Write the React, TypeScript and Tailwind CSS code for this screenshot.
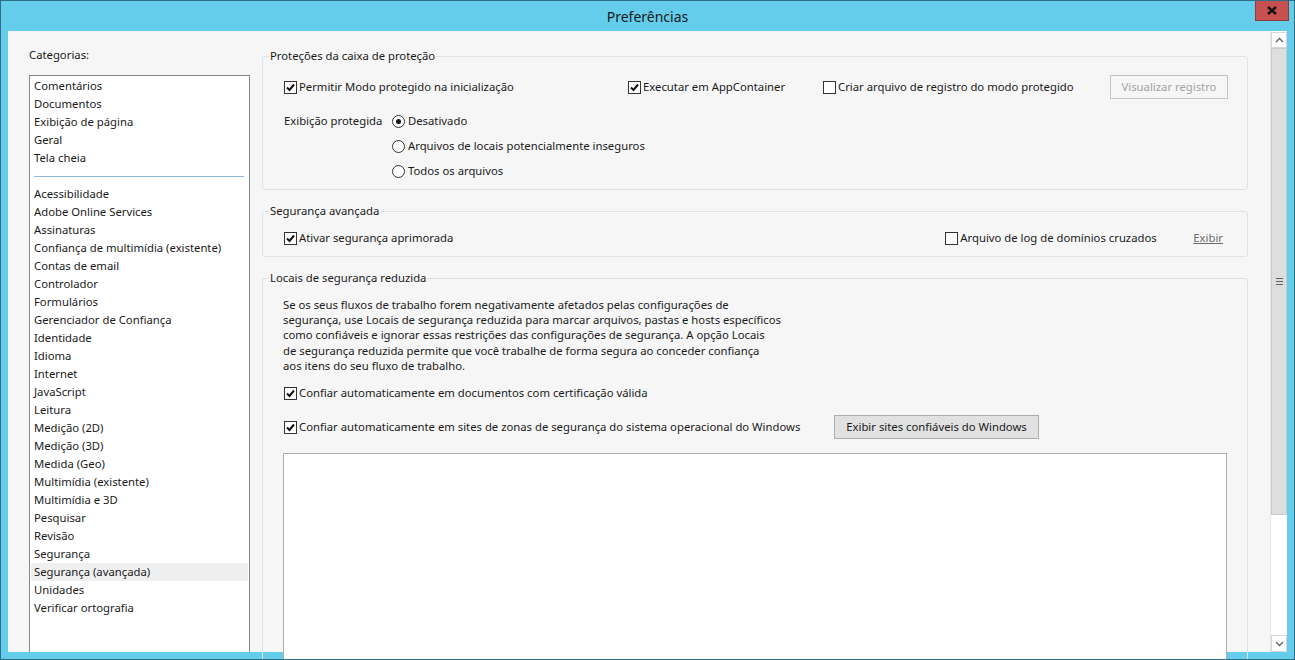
import { ReactNode } from 'react'

const categoriasTopo = ['Comentários', 'Documentos', 'Exibição de página', 'Geral', 'Tela cheia']

const categorias = [
    'Acessibilidade',
    'Adobe Online Services',
    'Assinaturas',
    'Confiança de multimídia (existente)',
    'Contas de email',
    'Controlador',
    'Formulários',
    'Gerenciador de Confiança',
    'Identidade',
    'Idioma',
    'Internet',
    'JavaScript',
    'Leitura',
    'Medição (2D)',
    'Medição (3D)',
    'Medida (Geo)',
    'Multimídia (existente)',
    'Multimídia e 3D',
    'Pesquisar',
    'Revisão',
    'Segurança',
    'Segurança (avançada)',
    'Unidades',
    'Verificar ortografia',
]

function Checkbox({ checked, label }: { checked?: boolean; label: string }) {
    return (
        <label className="flex items-center gap-[2px] whitespace-nowrap">
            <span className="w-[13px] h-[13px] border border-[#333333] bg-white flex items-center justify-center shrink-0">
                {checked && (
                    <svg width="9" height="9" viewBox="0 0 9 9">
                        <path d="M1 4.5 L3.5 7 L8 1.5" fill="none" stroke="#111" strokeWidth="2" />
                    </svg>
                )}
            </span>
            <span>{label}</span>
        </label>
    )
}

function Radio({ checked, label }: { checked?: boolean; label: string }) {
    return (
        <label className="flex items-center gap-[3px] whitespace-nowrap">
            <span className="w-[13px] h-[13px] rounded-full border border-[#333333] bg-white flex items-center justify-center shrink-0">
                {checked && <span className="w-[5px] h-[5px] rounded-full bg-[#111]" />}
            </span>
            <span>{label}</span>
        </label>
    )
}

function GroupBox({ title, children, className = '' }: { title: string; children: ReactNode; className?: string }) {
    return (
        <fieldset className={`border border-[#dde3e7] rounded-[3px] m-0 p-0 ${className}`}>
            <legend className="ml-[6px] px-[1px] leading-[16px] text-[#1a1a1a]">{title}</legend>
            {children}
        </fieldset>
    )
}

export default function App() {
    return (
        <div
            className="w-[1295px] h-[660px] bg-[#63cdeb] border border-[#2d6f86] flex flex-col overflow-hidden text-[11.3px] text-[#1a1a1a]"
            style={{ fontFamily: '"Segoe UI", "Noto Sans", sans-serif' }}
        >
            {/* Title bar */}
            <div className="h-[30px] shrink-0 flex items-start relative">
                <div className="flex-1 h-[30px] flex items-center justify-center text-[14px] text-[#1a1a1a]">Preferências</div>
                <div className="absolute right-[5px] top-[-1px] w-[34px] h-[21px] bg-[#c75050] border border-[#8c3a3a] flex items-center justify-center">
                    <svg width="10" height="9" viewBox="0 0 10 9">
                        <path d="M1 1 L9 8 M9 1 L1 8" stroke="#111" strokeWidth="2.4" />
                    </svg>
                </div>
            </div>

            {/* Body */}
            <div className="flex-1 ml-[7px] mr-[7px] mb-[7px] bg-[#f6f6f6] flex min-h-0">
                {/* Left: categories */}
                <div className="w-[250px] shrink-0 pl-[21px] flex flex-col">
                    <div className="h-[44px] pt-[16px] leading-[16px]">Categorias:</div>
                    <div className="w-[221px] flex-1 bg-white border border-[#828790] border-b-0 pt-[1px] px-[1px]">
                        {categoriasTopo.map((c) => (
                            <div key={c} className="h-[18px] leading-[18px] pl-[3px]">{c}</div>
                        ))}
                        <div className="h-[18px] flex items-center pl-[3px] pr-[4px]">
                            <div className="w-full h-px bg-[#8fb6d9]" />
                        </div>
                        {categorias.map((c) => (
                            <div
                                key={c}
                                className={`h-[18px] leading-[18px] pl-[3px] ${c === 'Segurança (avançada)' ? 'bg-[#efefef]' : ''}`}
                            >
                                {c}
                            </div>
                        ))}
                    </div>
                </div>

                {/* Right: settings */}
                <div className="flex-1 flex min-w-0">
                    <div className="flex-1 pl-[4px] pr-[22px] pt-[17px] flex flex-col gap-[13px] min-w-0">
                        <GroupBox title="Proteções da caixa de proteção">
                            <div className="pt-[11px] pb-[5px] pl-[21px]">
                                <div className="h-[24px] flex items-center">
                                    <div className="w-[344px]"><Checkbox checked label="Permitir Modo protegido na inicialização" /></div>
                                    <div className="w-[195px]"><Checkbox checked label="Executar em AppContainer" /></div>
                                    <div className="w-[287px]"><Checkbox label="Criar arquivo de registro do modo protegido" /></div>
                                    <div className="w-[118px] h-[24px] border border-[#c4c4c4] flex items-center justify-center text-[#a3a3a3]">
                                        Visualizar registro
                                    </div>
                                </div>
                                <div className="flex pt-[10px]">
                                    <div className="w-[108px] h-[25px] flex items-center">Exibição protegida</div>
                                    <div className="flex flex-col">
                                        <div className="h-[25px] flex items-center"><Radio checked label="Desativado" /></div>
                                        <div className="h-[25px] flex items-center"><Radio label="Arquivos de locais potencialmente inseguros" /></div>
                                        <div className="h-[25px] flex items-center"><Radio label="Todos os arquivos" /></div>
                                    </div>
                                </div>
                            </div>
                        </GroupBox>

                        <GroupBox title="Segurança avançada">
                            <div className="pt-[7px] pb-[5px] pl-[21px] pr-[24px] h-[37px] flex items-center">
                                <div className="flex-1"><Checkbox checked label="Ativar segurança aprimorada" /></div>
                                <div className="w-[248px]"><Checkbox label="Arquivo de log de domínios cruzados" /></div>
                                <span className="underline text-[#6b6b6b]">Exibir</span>
                            </div>
                        </GroupBox>

                        <GroupBox title="Locais de segurança reduzida" className="flex-1 border-b-0 rounded-b-none">
                            <div className="pl-[20px] pr-[20px] pt-[11px]">
                                <p className="leading-[15.2px]">
                                    Se os seus fluxos de trabalho forem negativamente afetados pelas configurações de<br />
                                    segurança, use Locais de segurança reduzida para marcar arquivos, pastas e hosts específicos<br />
                                    como confiáveis e ignorar essas restrições das configurações de segurança. A opção Locais<br />
                                    de segurança reduzida permite que você trabalhe de forma segura ao conceder confiança<br />
                                    aos itens do seu fluxo de trabalho.
                                </p>
                                <div className="h-[24px] flex items-center mt-[8px] pl-[1px]">
                                    <Checkbox checked label="Confiar automaticamente em documentos com certificação válida" />
                                </div>
                                <div className="h-[24px] flex items-center mt-[10px] pl-[1px]">
                                    <div className="w-[550px]">
                                        <Checkbox checked label="Confiar automaticamente em sites de zonas de segurança do sistema operacional do Windows" />
                                    </div>
                                    <div className="w-[205px] h-[24px] bg-[#e1e1e1] border border-[#adadad] flex items-center justify-center">
                                        Exibir sites confiáveis do Windows
                                    </div>
                                </div>
                                <div className="mt-[14px] h-[220px] bg-white border border-[#abadb3] border-b-0" />
                            </div>
                        </GroupBox>
                    </div>

                    {/* Scrollbar */}
                    <div className="w-[17px] shrink-0 flex flex-col bg-white border-l border-[#e6e6e6] pt-[1px]">
                        <div className="h-[16px] border border-[#d8d8d8] bg-white flex items-center justify-center">
                            <svg width="9" height="6" viewBox="0 0 9 6">
                                <path d="M1 5 L4.5 1.5 L8 5" fill="none" stroke="#606060" strokeWidth="1.3" />
                            </svg>
                        </div>
                        <div className="h-[467px] bg-[#dcdfdc] border border-[#c8cbc8] flex items-center justify-center">
                            <div className="flex flex-col gap-[2px]">
                                <div className="w-[7px] h-px bg-[#5f5f5f]" />
                                <div className="w-[7px] h-px bg-[#5f5f5f]" />
                                <div className="w-[7px] h-px bg-[#5f5f5f]" />
                            </div>
                        </div>
                        <div className="flex-1" />
                        <div className="h-[17px] border border-[#d8d8d8] bg-white flex items-center justify-center">
                            <svg width="9" height="6" viewBox="0 0 9 6">
                                <path d="M1 1 L4.5 4.5 L8 1" fill="none" stroke="#606060" strokeWidth="1.3" />
                            </svg>
                        </div>
                    </div>
                </div>
            </div>
        </div>
    )
}
